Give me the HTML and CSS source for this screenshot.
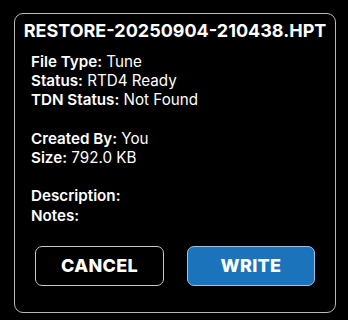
FILE: index.html
```html
<!DOCTYPE html>
<html lang="en">
<head>
<meta charset="utf-8">
<title>Restore</title>
<link rel="stylesheet" href="styles.css">
</head>
<body>
<div class="dialog">
  <h1 class="title">RESTORE-20250904-210438.HPT</h1>
  <div class="info">
    <div class="group">
      <div class="row"><b>File Type:</b> Tune</div>
      <div class="row"><b>Status:</b> RTD4 Ready</div>
      <div class="row"><b>TDN Status:</b> Not Found</div>
    </div>
    <div class="group">
      <div class="row"><b>Created By:</b> You</div>
      <div class="row"><b>Size:</b> 792.0 KB</div>
    </div>
    <div class="group">
      <div class="row"><b>Description:</b></div>
      <div class="row"><b>Notes:</b></div>
    </div>
  </div>
  <div class="actions">
    <button class="btn btn-cancel">CANCEL</button>
    <button class="btn btn-write">WRITE</button>
  </div>
</div>
</body>
</html>
```

FILE: styles.css
```css
html, body {
  margin: 0;
  padding: 0;
  background: #000;
}
body {
  width: 348px;
  height: 320px;
  font-family: Inter, "Liberation Sans", Arial, sans-serif;
  color: #fff;
}
.dialog {
  box-sizing: border-box;
  margin: 13px 0 0 14px;
  width: 322px;
  height: 300px;
  border: 1px solid #b9b9b9;
  border-radius: 9px;
  padding: 5px 6px 0 6px;
  display: flex;
  flex-direction: column;
}
.title {
  margin: 0;
  font-size: 18px;
  line-height: 24px;
  font-weight: 700;
  text-align: center;
  white-space: nowrap;
}
.info {
  margin-top: 9px;
  padding-left: 10px;
  display: flex;
  flex-direction: column;
  gap: 19.2px;
}
.row {
  font-size: 15.2px;
  line-height: 19.2px;
}
.row b {
  font-weight: 600;
}
.actions {
  margin-top: 21px;
  padding: 0 14px;
  display: flex;
  justify-content: space-between;
}
.btn {
  box-sizing: border-box;
  width: 129px;
  height: 40px;
  border-radius: 7px;
  font-family: Inter, "Liberation Sans", Arial, sans-serif;
  font-size: 18px;
  font-weight: 800;
  letter-spacing: 0.3px;
  color: #fff;
  padding: 0;
  display: flex;
  align-items: center;
  justify-content: center;
}
.btn-cancel {
  background: #000;
  border: 1px solid #c8c8c8;
}
.btn-write {
  width: 128px;
  background: #1b74bb;
  border: 1px solid #9fc3e3;
}
```
